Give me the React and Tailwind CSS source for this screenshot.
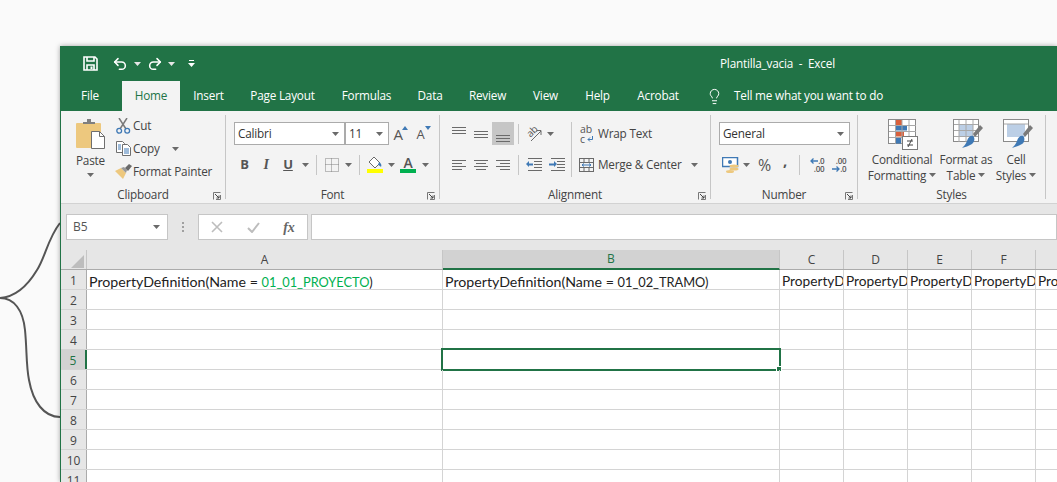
import React from 'react';
import { Undo2, Redo2, Lightbulb } from 'lucide-react';

const tabs = [
    { label: 'Insert', w: 'w-[29px]', ml: 'ml-[14px]' },
    { label: 'Page Layout', w: 'w-[65px]', ml: 'ml-[27px]' },
    { label: 'Formulas', w: 'w-[49px]', ml: 'ml-[27px]' },
    { label: 'Data', w: 'w-[24px]', ml: 'ml-[27px]' },
    { label: 'Review', w: 'w-[37px]', ml: 'ml-[27px]' },
    { label: 'View', w: 'w-[25px]', ml: 'ml-[27px]' },
    { label: 'Help', w: 'w-[25px]', ml: 'ml-[27px]' },
    { label: 'Acrobat', w: 'w-[42px]', ml: 'ml-[27px]' },
];

const columns = [
    { name: 'A', w: 'w-[356px]' },
    { name: 'B', w: 'w-[337px]', active: true },
    { name: 'C', w: 'w-[64px]' },
    { name: 'D', w: 'w-[64px]' },
    { name: 'E', w: 'w-[64px]' },
    { name: 'F', w: 'w-[64px]' },
    { name: '', w: 'w-[64px]' },
];

const rows = [1, 2, 3, 4, 5, 6, 7, 8, 9, 10, 11];

function Caret({ className = 'text-[#6a6a6a]' }) {
    return (
        <svg width="7" height="4" viewBox="0 0 7 4" className={className}>
            <path d="M0 0h7L3.5 4z" fill="currentColor" />
        </svg>
    );
}

function Slot({ w, children, className = '' }) {
    return <div className={`flex h-full shrink-0 items-center justify-center ${w} ${className}`}>{children}</div>;
}

function VSep() {
    return <div className="h-[20px] w-px bg-[#c6c6c6]" />;
}

function Lines({ items, y = 0 }) {
    return (
        <svg width="16" height="16" viewBox="0 0 16 16">
            {items.map(([a, b, ly], i) => (
                <rect key={i} x={a} y={ly + y} width={b - a} height="1" fill="#6a6a6a" />
            ))}
        </svg>
    );
}

function Launcher() {
    return (
        <svg width="8" height="8" viewBox="0 0 8 8" className="absolute right-[4px] top-[5px]">
            <path d="M.5 7.5v-7h7M3 7.5h4.5V3" fill="none" stroke="#777" />
            <path d="M2 2l4 4M6 3.5V6H3.5" fill="none" stroke="#444" />
        </svg>
    );
}

function Group({ w, label, launcher, children }) {
    return (
        <>
            <div className={`flex h-full shrink-0 flex-col ${w}`}>
                <div className="h-[76px]">{children}</div>
                <div className="relative h-[16px] text-center leading-[15px] text-[#444]">
                    {label}
                    {launcher && <Launcher />}
                </div>
            </div>
            <div className="mt-[4px] h-[84px] w-px shrink-0 bg-[#c6c6c6]" />
        </>
    );
}

function Combo({ w, text, pad = 'pl-[3px]' }) {
    return (
        <div className={`flex h-[23px] items-center justify-between border border-[#ababab] bg-white pr-[5px] text-[#333] ${w} ${pad}`}>
            <span className="font-normal">{text}</span>
            <Caret />
        </div>
    );
}

function SaveIcon() {
    return (
        <svg width="15" height="15" viewBox="0 0 15 15" fill="none" stroke="white" strokeWidth="1.6">
            <path d="M1 1h11l2 2v11H1z" />
            <path d="M4 1v4h7V1M4 14V9h7v5" />
            <rect x="7.500" y="10.500" width="2" height="2.500" fill="white" stroke="none" />
        </svg>
    );
}

function PasteIcon() {
    return (
        <svg width="30" height="31" viewBox="0 0 30 31">
            <rect x="0" y="4" width="25" height="25" rx="1" fill="#edc87e" />
            <path d="M7 5V3h4V0h4v3h4v2z" fill="#7f7f7f" />
            <path d="M15.5 12.5h8l5 5v12h-13z" fill="white" stroke="#6f6f6f" />
            <path d="M23.5 12.5v5h5" fill="none" stroke="#6f6f6f" />
        </svg>
    );
}

function CutIcon() {
    return (
        <svg width="15" height="16" viewBox="0 0 15 16" fill="none">
            <path d="M3 0l7 11M11 0L4 11" stroke="#7a7a7a" strokeWidth="1.5" />
            <circle cx="3.2" cy="12.8" r="2.4" stroke="#3f79b5" strokeWidth="1.3" />
            <circle cx="11.2" cy="12.8" r="2.4" stroke="#3f79b5" strokeWidth="1.3" />
        </svg>
    );
}

function CopyIcon() {
    return (
        <svg width="15" height="15" viewBox="0 0 15 15" fill="white">
            <path d="M.5.5h6l2 2v9h-8z" stroke="#6f6f6f" />
            <path d="M6.5 3.5h5l3 3v8h-8z" stroke="#6f6f6f" />
            <path d="M2 4h3M2 6h3M2 8h3M8 8h5M8 10h5M8 12h5" stroke="#3f79b5" />
        </svg>
    );
}

function PainterIcon() {
    return (
        <svg width="17" height="15" viewBox="0 0 17 15">
            <path d="M0 7l6-3 5 5-3 6z" fill="#edc87e" />
            <path d="M6 4l3-1 3 3-1 3z" fill="#999" />
            <path d="M10 4l4-4 3 2-4 5z" fill="#6a6a6a" />
        </svg>
    );
}

function BigA({ up }) {
    return (
        <div className={`relative flex w-[14px] items-end font-normal text-[#555] ${up ? 'text-[15px]' : 'text-[13px]'} leading-[16px]`}>
            A
            <svg width="6" height="4" viewBox="0 0 6 4" className="absolute right-0 top-0">
                <path d={up ? 'M0 4h6L3 0z' : 'M0 0h6L3 4z'} fill="#3f79b5" />
            </svg>
        </div>
    );
}

function BordersIcon() {
    return (
        <svg width="14" height="14" viewBox="0 0 14 14" fill="none" stroke="#808080" strokeDasharray="1 1">
            <rect x=".5" y=".5" width="13" height="13" />
            <path d="M6.500 .5v13M.5 6.500h13" />
        </svg>
    );
}

function FillIcon() {
    return (
        <svg width="16" height="17" viewBox="0 0 16 17">
            <path d="M7 1l6 6-5 5-6-6z" fill="white" stroke="#6a6a6a" />
            <path d="M12 6c2 1 3 3 2 5-1-1-2-2-3-2z" fill="#3f79b5" />
            <rect y="13" width="16" height="4" fill="#ffff00" />
        </svg>
    );
}

function FontColorIcon() {
    return (
        <div className="flex h-[17px] w-[16px] flex-col items-center">
            <span className="h-[13px] text-[14px] font-semibold leading-[13px] text-[#555]">A</span>
            <div className="h-[4px] w-full bg-[#00b050]" />
        </div>
    );
}

function OrientIcon() {
    return (
        <div className="relative h-[16px] w-[16px]">
            <span className="absolute left-[0px] top-[-2px] -rotate-45 text-[10px] leading-[14px] text-[#555]">ab</span>
            <svg width="16" height="16" viewBox="0 0 16 16" className="absolute inset-0">
                <path d="M5 15L15 5M10.5 4.5H15V9" fill="none" stroke="#6a6a6a" />
            </svg>
        </div>
    );
}

function IndentIcon({ inc }) {
    return (
        <svg width="16" height="13" viewBox="0 0 16 13">
            <path d="M2 .5h14M8 3.5h8M8 6.5h8M8 9.5h8M2 12.5h14" stroke="#6a6a6a" />
            {inc ? <path d="M0 5.5h5V3l3 3-3 3V7.500H0z" fill="#3f79b5" /> : <path d="M7 5.500H3V3L0 6l3 3V7.500h4z" fill="#3f79b5" />}
        </svg>
    );
}

function WrapIcon() {
    return (
        <div className="relative h-[20px] w-[13px] text-[10.5px] leading-[10px] text-[#555]">
            <div>ab</div>
            <div>c</div>
            <svg width="6" height="6" viewBox="0 0 6 6" className="absolute bottom-[2px] right-0">
                <path d="M5.500 0v3.500H1M3 1.500L1 3.500l2 2" fill="none" stroke="#3f79b5" />
            </svg>
        </div>
    );
}

function MergeIcon() {
    return (
        <svg width="15" height="14" viewBox="0 0 15 14" fill="none">
            <rect x=".5" y=".5" width="14" height="13" stroke="#6a6a6a" />
            <path d="M.5 4.500h14M.5 9.500h14M5 .5v4M10 .5v4M5 9.500v4M10 9.500v4" stroke="#6a6a6a" />
            <path d="M3 7h9M5 5.500L3 7l2 1.500M10 5.500L12 7l-2 1.500" stroke="#3f79b5" />
        </svg>
    );
}

function CurrencyIcon() {
    return (
        <svg width="17" height="16" viewBox="0 0 17 16">
            <rect x=".5" y=".5" width="15" height="9" fill="white" stroke="#3f79b5" strokeWidth="1.5" />
            <circle cx="8" cy="5" r="2" fill="#3f79b5" />
            <ellipse cx="12" cy="9" rx="4.500" ry="1.500" fill="#edc87e" />
            <ellipse cx="12" cy="12" rx="4.500" ry="1.500" fill="#edc87e" />
            <ellipse cx="8" cy="14.500" rx="4" ry="1.500" fill="#edc87e" />
        </svg>
    );
}

function DecimalIcon({ inc }) {
    return (
        <div className="relative h-[16px] w-[15px] text-right text-[8px] font-semibold leading-[8px] text-[#555]">
            <div>{inc ? '.00' : '.0'}</div>
            <div>{inc ? '.0' : '.00'}</div>
            <svg width="8" height="6" viewBox="0 0 8 6" className={`absolute left-0 ${inc ? 'bottom-[1px]' : 'top-[1px]'}`}>
                {inc ? <path d="M0 3h7M4.500.5L7 3 4.500 5.500" fill="none" stroke="#3f79b5" strokeWidth="1.300" /> : <path d="M8 3H1M3.500.5L1 3l2.500 2.500" fill="none" stroke="#3f79b5" strokeWidth="1.300" />}
            </svg>
        </div>
    );
}

function ConditionalIcon() {
    return (
        <svg width="30" height="31" viewBox="0 0 30 31">
            <rect x=".5" y=".5" width="27" height="24" fill="white" stroke="#8a8a8a" />
            <rect x="8" y="1" width="6" height="5" fill="#d9603c" />
            <rect x="8" y="6.500" width="11" height="5" fill="#3f79b5" />
            <rect x="8" y="12.500" width="8" height="5" fill="#d9603c" />
            <rect x="8" y="18.500" width="5" height="6" fill="#3f79b5" />
            <path d="M7.500 1v24M14 1v24M21 1v24M1 6.500h27M1 12.500h27M1 18.500h27" stroke="#a8a8a8" strokeWidth="1" />
            <rect x="14.500" y="17.500" width="15" height="13" fill="white" stroke="#7a7a7a" />
            <path d="M19 22h6M19 26h6M24 20l-4 8" stroke="#444" />
        </svg>
    );
}

function TableBrushIcon({ lined }) {
    return (
        <svg width="30" height="31" viewBox="0 0 30 31">
            <rect x=".5" y=".5" width="25" height="22" fill="white" stroke="#8a8a8a" />
            <rect x={lined ? 6 : 4} y="5" width={lined ? 14 : 18} height="13" fill="#bccfe6" />
            {lined && <path d="M6 1v22M13 1v22M20 1v22M1 5.500h24M1 11.500h24M1 17.500h24" stroke="#a8a8a8" />}
            {!lined && <path d="M1 5h24" stroke="#a8a8a8" />}
            <path d="M20 15l7-9 3 3-8 9z" fill="#7a7a7a" />
            <path d="M14 22c1-4 4-6 6-5s2 6-1 8-7 3-10 4c2-2 4-4 5-7z" fill="#3f79b5" />
        </svg>
    );
}

function StyleButton({ icon, iconPad, line1, line2 }) {
    return (
        <div className="flex h-full flex-col items-center whitespace-nowrap pt-[8px] leading-[16px] text-[#444]">
            <div className={`-mb-[1px] h-[33px] ${iconPad}`}>{icon}</div>
            <div>{line1}</div>
            <div className="flex items-center gap-[3px]">
                {line2}
                <Caret />
            </div>
        </div>
    );
}

function Ribbon() {
    return (
        <div className="flex h-[93px] shrink-0 border-b border-[#d2d2d2] bg-[#f3f3f3] text-[11.75px] tracking-[-0.2px]">
            <Group w="w-[164px]" label="Clipboard" launcher>
                <div className="flex pl-[15px]">
                    <div className="flex w-[29px] flex-col items-center pt-[8px] text-[#444]">
                        <div className="h-[33px]"><PasteIcon /></div>
                        <div className="leading-[16px]">Paste</div>
                        <div className="mt-[5px]"><Caret /></div>
                    </div>
                    <div className="ml-[9px] pt-[3px] text-[#444]">
                        <div className="flex h-[23px] items-center"><Slot w="w-[19px]"><CutIcon /></Slot>Cut</div>
                        <div className="flex h-[23px] items-center"><Slot w="w-[19px]"><CopyIcon /></Slot>Copy<span className="ml-[12px]"><Caret /></span></div>
                        <div className="flex h-[23px] items-center"><Slot w="w-[19px]"><PainterIcon /></Slot>Format Painter</div>
                    </div>
                </div>
            </Group>

            <Group w="w-[213px]" label="Font" launcher>
                <div className="pl-[8px] pt-[11px]">
                    <div className="flex h-[23px] items-center">
                        <Combo w="w-[111px]" text="Calibri" />
                        <Combo w="w-[44px]" text="11" />
                        <Slot w="w-[23px]"><BigA up /></Slot>
                        <Slot w="w-[23px]"><BigA /></Slot>
                    </div>
                    <div className="mt-[8px] flex h-[23px] items-center text-[13px] text-[#555]">
                        <Slot w="w-[21px]"><b className="font-bold">B</b></Slot>
                        <Slot w="w-[22px]"><i className="font-['Liberation_Serif',serif] text-[14px] font-bold">I</i></Slot>
                        <Slot w="w-[22px]"><u className="font-bold">U</u></Slot>
                        <Slot w="w-[12px]"><Caret /></Slot>
                        <Slot w="w-[10px]"><VSep /></Slot>
                        <Slot w="w-[21px]"><BordersIcon /></Slot>
                        <Slot w="w-[12px]"><Caret /></Slot>
                        <Slot w="w-[10px]"><VSep /></Slot>
                        <Slot w="w-[22px]"><FillIcon /></Slot>
                        <Slot w="w-[10px]"><Caret /></Slot>
                        <Slot w="w-[24px]"><FontColorIcon /></Slot>
                        <Slot w="w-[10px]"><Caret /></Slot>
                    </div>
                </div>
            </Group>

            <Group w="w-[270px]" label="Alignment" launcher>
                <div className="flex pl-[8px] pt-[11px]">
                    <div className="w-[123px]">
                        <div className="flex h-[23px] items-center">
                            <Slot w="w-[22px]"><Lines items={[[1, 15, 3], [1, 15, 6], [1, 15, 9]]} y={-2} /></Slot>
                            <Slot w="w-[22px]"><Lines items={[[1, 15, 5], [1, 15, 8], [1, 15, 11]]} /></Slot>
                            <Slot w="w-[22px]" className="bg-[#c6c6c6]"><Lines items={[[1, 15, 8], [1, 15, 11], [1, 15, 14]]} y={1} /></Slot>
                            <Slot w="w-[8px]"><VSep /></Slot>
                            <Slot w="w-[24px]"><OrientIcon /></Slot>
                            <Slot w="w-[8px]"><Caret /></Slot>
                        </div>
                        <div className="mt-[8px] flex h-[23px] items-center">
                            <Slot w="w-[22px]"><Lines items={[[1, 15, 3], [1, 11, 6], [1, 15, 9], [1, 11, 12]]} /></Slot>
                            <Slot w="w-[22px]"><Lines items={[[1, 15, 3], [3, 13, 6], [1, 15, 9], [3, 13, 12]]} /></Slot>
                            <Slot w="w-[22px]"><Lines items={[[1, 15, 3], [5, 15, 6], [1, 15, 9], [5, 15, 12]]} /></Slot>
                            <Slot w="w-[8px]"><VSep /></Slot>
                            <Slot w="w-[24px]"><IndentIcon /></Slot>
                            <Slot w="w-[22px]"><IndentIcon inc /></Slot>
                        </div>
                    </div>
                    <div className="h-[55px] w-px bg-[#c6c6c6]" />
                    <div className="text-[#444]">
                        <div className="flex h-[23px] items-center">
                            <Slot w="w-[26px]" className="justify-end pr-[5px]"><WrapIcon /></Slot>
                            Wrap Text
                        </div>
                        <div className="mt-[8px] flex h-[23px] items-center">
                            <Slot w="w-[26px]" className="justify-end pr-[4px]"><MergeIcon /></Slot>
                            Merge &amp; Center
                            <span className="ml-[9px]"><Caret /></span>
                        </div>
                    </div>
                </div>
            </Group>

            <Group w="w-[146px]" label="Number" launcher>
                <div className="pl-[8px] pt-[11px]">
                    <Combo w="w-[131px]" text="General" />
                    <div className="mt-[8px] flex h-[23px] items-center text-[#555]">
                        <Slot w="w-[22px]"><CurrencyIcon /></Slot>
                        <Slot w="w-[10px]"><Caret /></Slot>
                        <Slot w="w-[27px]"><span className="text-[16px]">%</span></Slot>
                        <Slot w="w-[14px]" className="pb-[8px]"><span className="text-[15px] font-bold">,</span></Slot>
                        <Slot w="w-[14px]"><VSep /></Slot>
                        <Slot w="w-[22px]"><DecimalIcon /></Slot>
                        <Slot w="w-[22px]"><DecimalIcon inc /></Slot>
                    </div>
                </div>
            </Group>

            <Group w="w-[187px]" label="Styles">
                <div className="flex h-full pl-[10px]">
                    <div className="flex w-[68px] justify-center"><StyleButton iconPad="pl-[2px]" icon={<ConditionalIcon />} line1="Conditional" line2="Formatting" /></div>
                    <div className="flex w-[60px] justify-center"><StyleButton iconPad="pl-[4px]" icon={<TableBrushIcon lined />} line1="Format as" line2="Table" /></div>
                    <div className="flex w-[40px] justify-center"><StyleButton iconPad="pl-[4px]" icon={<TableBrushIcon />} line1="Cell" line2="Styles" /></div>
                </div>
            </Group>
        </div>
    );
}

function FormulaBar() {
    return (
        <div className="flex h-[46px] shrink-0 bg-[#e6e6e6] pl-[5px] pt-[10px] text-[12px]">
            <div className="flex h-[26px] w-[102px] items-center justify-between border border-[#c6c6c6] bg-white pl-[6px] pr-[7px] text-[#555]">
                <span>B5</span>
                <Caret />
            </div>
            <div className="flex h-[26px] w-[30px] items-center justify-center">
                <svg width="3" height="11" viewBox="0 0 3 11" fill="#a0a0a0">
                    <rect y="0" width="2" height="2" />
                    <rect y="4" width="2" height="2" />
                    <rect y="8" width="2" height="2" />
                </svg>
            </div>
            <div className="flex h-[26px] w-[110px] items-center border border-[#c6c6c6] bg-white">
                <Slot w="w-[36px]">
                    <svg width="12" height="12" viewBox="0 0 12 12"><path d="M1 1l10 10M11 1L1 11" stroke="#bdbdbd" strokeWidth="1.600" /></svg>
                </Slot>
                <Slot w="w-[36px]">
                    <svg width="13" height="11" viewBox="0 0 13 11"><path d="M1 6l4 4 7-9" fill="none" stroke="#bdbdbd" strokeWidth="2" /></svg>
                </Slot>
                <Slot w="w-[36px]"><i className="font-['Liberation_Serif',serif] text-[14px] font-bold text-[#666]">fx</i></Slot>
            </div>
            <div className="ml-[3px] h-[26px] flex-1 border border-[#c6c6c6] bg-white" />
        </div>
    );
}

function Sheet() {
    return (
        <div className="flex-1 bg-white font-['Lato',sans-serif] text-[14.2px] text-[#222]">
            <div className="flex h-[20px] border-b border-[#ababab] bg-[#e6e6e6] font-['Open_Sans',sans-serif] text-[12px] text-[#444]">
                <div className="flex w-[26px] shrink-0 items-end justify-end border-r border-[#c6c6c6] pb-[1px] pr-[2px]">
                    <svg width="13" height="13" viewBox="0 0 13 13"><path d="M13 0v13H0z" fill="#bdbdbd" /></svg>
                </div>
                {columns.map((c) => (
                    <div
                        key={c.name + c.w}
                        className={`flex shrink-0 items-center justify-center border-r border-[#c6c6c6] ${c.w} ${c.active ? 'h-[20px] border-b-2 border-b-[#217346] bg-[#d2d2d2] text-[#217346]' : ''}`}
                    >
                        {c.name}
                    </div>
                ))}
            </div>
            {rows.map((r) => (
                <div key={r} className="flex h-[20px] border-b border-[#d4d4d4]">
                    <div
                        className={`flex w-[26px] shrink-0 items-center justify-center border-r pt-[2px] font-['Open_Sans',sans-serif] text-[12px] text-[#444] ${
                            r === 5 ? 'border-r-2 border-r-[#217346] bg-[#d2d2d2] text-[#217346]' : 'border-r-[#ababab] bg-[#e6e6e6]'
                        }`}
                    >
                        {r}
                    </div>
                    {columns.map((c, i) => (
                        <div key={i} className={`relative flex shrink-0 items-center overflow-visible whitespace-nowrap border-r border-[#d4d4d4] pt-[4px] ${c.w}`}>
                            {r === 1 && i === 0 && (
                                <span className="pl-[2px]">
                                    PropertyDefinition(Name = <span className="text-[12.8px] text-[#00b050]">01_01_PROYECTO</span><span className="text-[12.8px]">)</span>
                                </span>
                            )}
                            {r === 1 && i === 1 && (
                                <span className="pl-[2px]">
                                    PropertyDefinition(Name = <span className="text-[12.8px]">01_02_TRAMO)</span>
                                </span>
                            )}
                            {r === 1 && i > 1 && (
                                <span className="block w-full overflow-hidden pl-[2px] text-[13.7px]">{i === 6 ? 'Pro' : 'PropertyD'}</span>
                            )}
                            {r === 5 && i === 1 && (
                                <div className="absolute left-[-2px] top-[-2px] h-[23px] w-[340px] border-2 border-[#217346]">
                                    <div className="absolute bottom-[-3px] right-[-3px] h-[6px] w-[6px] border border-white bg-[#217346]" />
                                </div>
                            )}
                        </div>
                    ))}
                </div>
            ))}
        </div>
    );
}

export default function App() {
    return (
        <div className="relative h-[482px] w-[1057px] overflow-hidden bg-[#fafafa] pl-[60px] pt-[46px] font-['Open_Sans',sans-serif]">
            <svg width="62" height="482" viewBox="0 0 62 482" fill="none" className="absolute left-0 top-0">
                <path d="M60 223C48 238 45 258 37 270C28 285 15 297 0 298C14 298 23 310 25 330C27 350 26 365 29 380C33 402 44 417 60 417" stroke="#555" strokeWidth="2" />
            </svg>
            <div className="relative flex h-[436px] w-[997px] flex-col overflow-hidden border-l border-[#217346] shadow-[0_0_5px_rgba(0,0,0,0.35)]">
                <div className="h-[65px] shrink-0 bg-[#217346] text-[11.75px] tracking-[-0.2px] text-white">
                    <div className="flex h-[35px] items-center">
                        <div className="ml-[22px]"><SaveIcon /></div>
                        <Undo2 size={16} strokeWidth={2.3} color="white" className="ml-[14px]" />
                        <span className="ml-[6px]"><Caret className="text-[#e6e6e6]" /></span>
                        <Redo2 size={16} strokeWidth={2.3} color="white" className="ml-[6px]" />
                        <span className="ml-[5px]"><Caret className="text-[#e6e6e6]" /></span>
                        <div className="ml-[13px] flex flex-col items-center gap-[2px]">
                            <div className="h-px w-[5px] bg-white" />
                            <Caret className="text-white" />
                        </div>
                        <div className="ml-[525px] whitespace-pre">Plantilla_vacia  -  Excel</div>
                    </div>
                    <div className="flex h-[30px] items-center">
                        <span className="ml-[20px] w-[18px] text-center">File</span>
                        <div className="ml-[23px] flex h-full w-[58px] items-center justify-center bg-[#f3f3f3] text-[#217346]">Home</div>
                        {tabs.map((t) => (
                            <span key={t.label} className={`flex justify-center whitespace-nowrap ${t.w} ${t.ml}`}>{t.label}</span>
                        ))}
                        <Lightbulb size={17} strokeWidth={1.4} color="white" className="ml-[27px]" />
                        <span className="ml-[11px] whitespace-nowrap">Tell me what you want to do</span>
                    </div>
                </div>
                <Ribbon />
                <FormulaBar />
                <Sheet />
            </div>
        </div>
    );
}
